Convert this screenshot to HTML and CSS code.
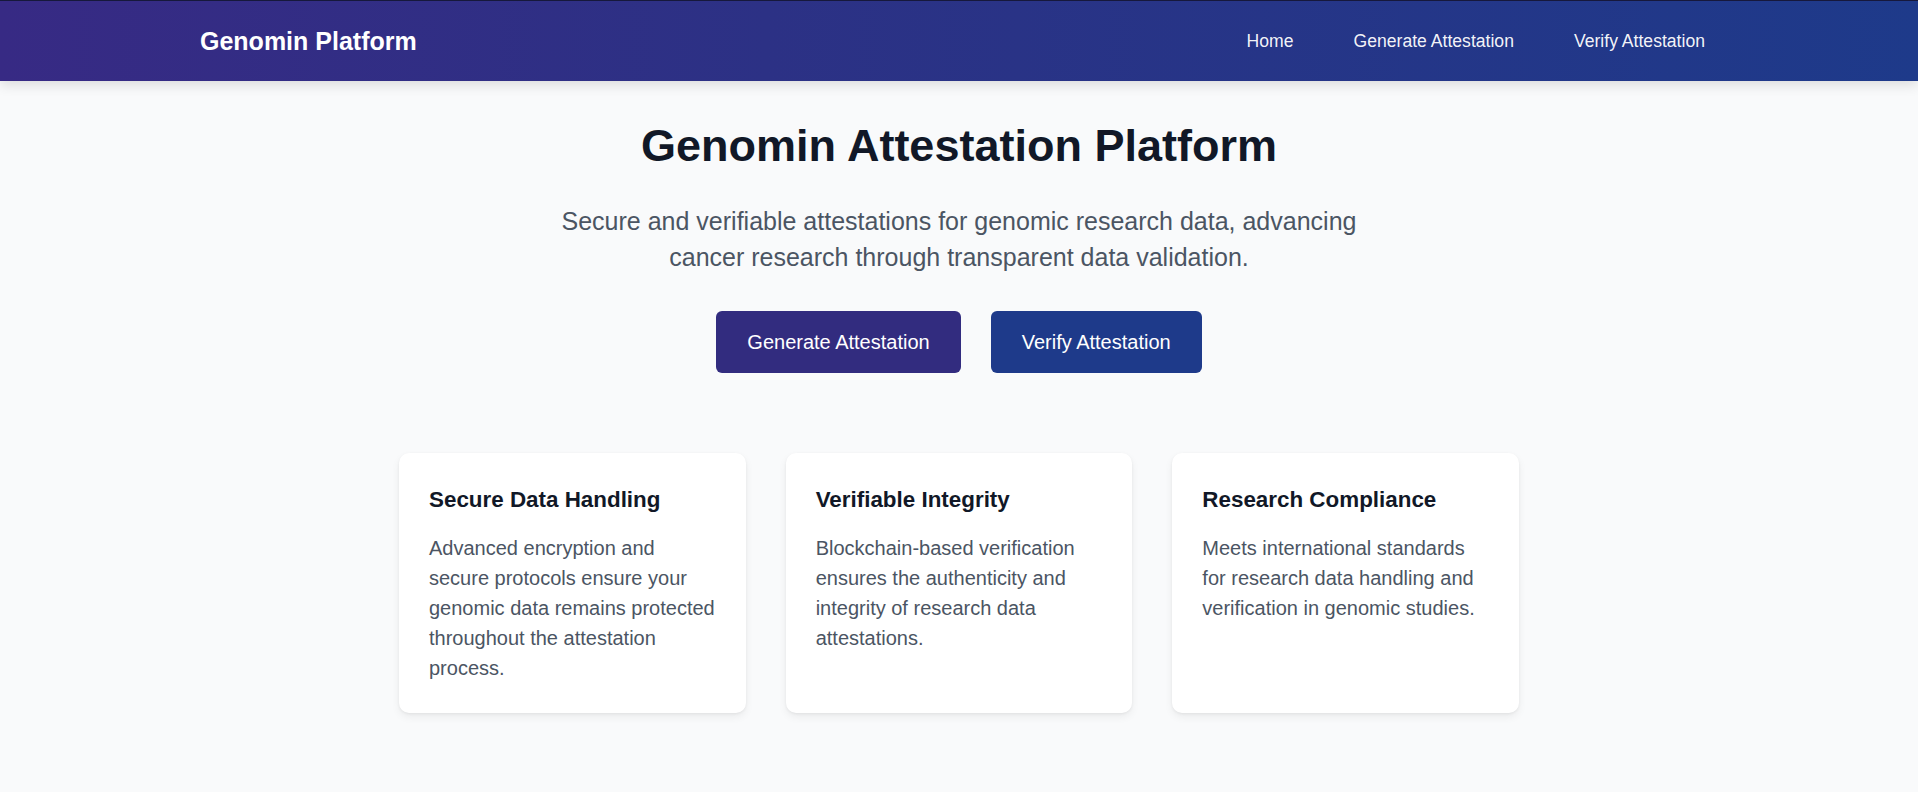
FILE: index.html
```html
<!DOCTYPE html>
<html lang="en">
<head>
<meta charset="utf-8">
<title>Genomin Platform</title>
<link rel="stylesheet" href="styles.css">
</head>
<body>
<header class="site-header">
  <div class="header-inner">
    <a class="logo" href="#">Genomin Platform</a>
    <nav class="nav">
      <a href="#">Home</a>
      <a href="#">Generate Attestation</a>
      <a href="#">Verify Attestation</a>
    </nav>
  </div>
</header>
<main class="main">
  <section class="hero">
    <h1>Genomin Attestation Platform</h1>
    <p class="subtitle">Secure and verifiable attestations for genomic research data, advancing cancer research through transparent data validation.</p>
    <div class="actions">
      <a class="btn btn-generate" href="#">Generate Attestation</a>
      <a class="btn btn-verify" href="#">Verify Attestation</a>
    </div>
  </section>
  <section class="features">
    <div class="card">
      <h3>Secure Data Handling</h3>
      <p>Advanced encryption and secure protocols ensure your genomic data remains protected throughout the attestation process.</p>
    </div>
    <div class="card">
      <h3>Verifiable Integrity</h3>
      <p>Blockchain-based verification ensures the authenticity and integrity of research data attestations.</p>
    </div>
    <div class="card">
      <h3>Research Compliance</h3>
      <p>Meets international standards for research data handling and verification in genomic studies.</p>
    </div>
  </section>
</main>
</body>
</html>
```
FILE: styles.css
```css
* { box-sizing: border-box; }

html, body {
  margin: 0;
  padding: 0;
}

body {
  font-family: "Liberation Sans", Arial, sans-serif;
  background: #f9fafb;
  color: #111827;
  min-height: 100vh;
}

.site-header {
  height: 81px;
  border-top: 1px solid #16183c;
  background: linear-gradient(90deg, #372a84 0%, #2c3185 40%, #1e3a8a 100%);
  box-shadow: 0 4px 12px rgba(0, 0, 0, 0.12);
  position: relative;
  z-index: 1;
}

.header-inner {
  height: 80px;
  max-width: 1518px;
  margin: 0 auto;
  display: flex;
  align-items: center;
  justify-content: space-between;
}

.logo {
  color: #ffffff;
  font-size: 25px;
  font-weight: 700;
  text-decoration: none;
}

.nav {
  display: flex;
  gap: 40px;
  margin-right: 3px;
}

.nav a {
  color: rgba(255, 255, 255, 0.96);
  font-size: 17.6px;
  text-decoration: none;
  padding: 0 10px;
}

.hero {
  text-align: center;
  padding-top: 38px;
}

.hero h1 {
  margin: 0;
  font-size: 45px;
  line-height: 54px;
  font-weight: 700;
  color: #111827;
}

.subtitle {
  margin: 30px auto 0;
  max-width: 840px;
  font-size: 25px;
  line-height: 36px;
  color: #4b5563;
}

.actions {
  margin-top: 36px;
  display: flex;
  justify-content: center;
  gap: 30px;
}

.btn {
  display: inline-block;
  padding: 19px 31px;
  font-size: 20px;
  line-height: 24px;
  color: #ffffff;
  text-decoration: none;
  border-radius: 6px;
}

.btn-generate {
  background: #322c7f;
}

.btn-verify {
  background: #1e3a8a;
}

.features {
  max-width: 1120px;
  margin: 80px auto 0;
  display: grid;
  grid-template-columns: repeat(3, 1fr);
  gap: 40px;
}

.card {
  background: #ffffff;
  border-radius: 10px;
  padding: 32px 30px 30px;
  box-shadow: 0 4px 8px rgba(0, 0, 0, 0.06), 0 1px 3px rgba(0, 0, 0, 0.06);
}

.card h3 {
  margin: 0 0 18px;
  font-size: 22.4px;
  line-height: 30px;
  font-weight: 700;
  color: #111827;
}

.card p {
  margin: 0;
  font-size: 20px;
  line-height: 30px;
  color: #4b5563;
}
```
